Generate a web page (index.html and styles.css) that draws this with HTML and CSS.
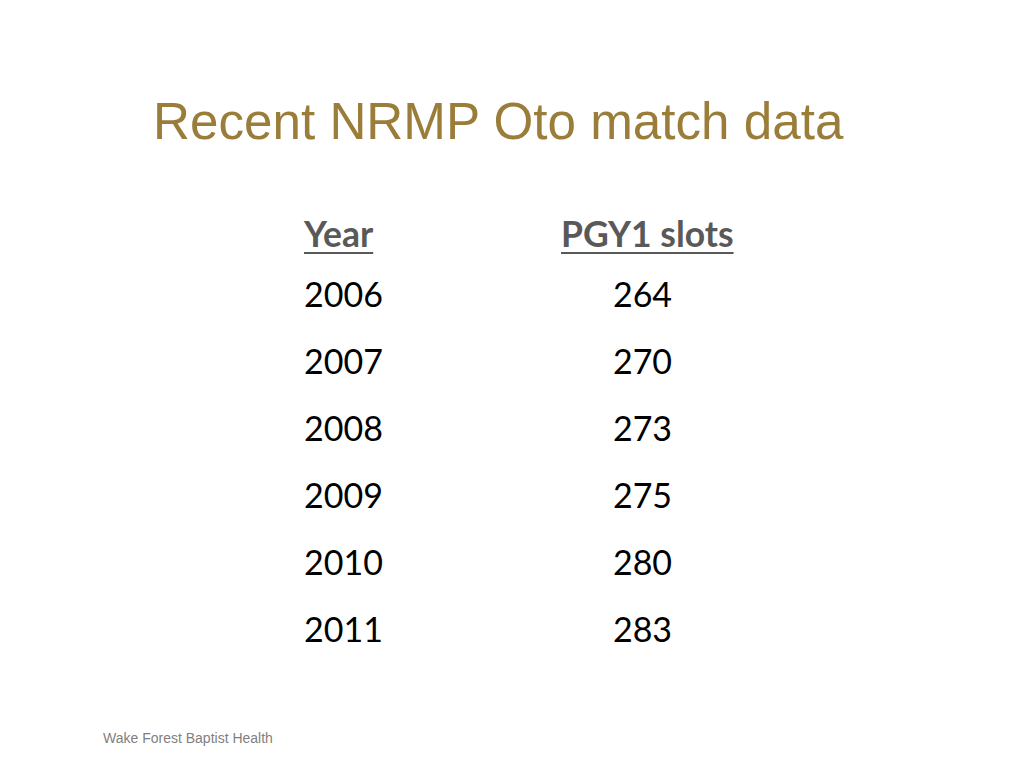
FILE: index.html
```html
<!DOCTYPE html>
<html>
<head>
<meta charset="utf-8">
<title>Recent NRMP Oto match data</title>
<link rel="stylesheet" href="styles.css">
</head>
<body>
<div class="slide">
  <h1 class="title">Recent NRMP Oto match data</h1>
  <div class="table">
    <div class="head"><span class="hd">Year</span></div>
    <div class="head"><span class="hd">PGY1 slots</span></div>
    <div class="year">2006</div><div class="num">264</div>
    <div class="year">2007</div><div class="num">270</div>
    <div class="year">2008</div><div class="num">273</div>
    <div class="year">2009</div><div class="num">275</div>
    <div class="year">2010</div><div class="num">280</div>
    <div class="year">2011</div><div class="num">283</div>
  </div>
  <div class="footer">Wake Forest Baptist Health</div>
</div>
</body>
</html>
```
FILE: styles.css
```css
html, body {
  margin: 0;
  padding: 0;
  background: #ffffff;
}
.slide {
  width: 1024px;
  height: 768px;
  display: flex;
  flex-direction: column;
  box-sizing: border-box;
  padding-bottom: 22px;
}
.title {
  margin: 92px 0 0 0;
  padding-left: 153px;
  font-family: "Liberation Sans", Arial, sans-serif;
  font-weight: normal;
  font-size: 51.2px;
  line-height: 60px;
  color: #9b7d3a;
  white-space: nowrap;
}
.table {
  margin-top: 51px;
  padding-left: 304px;
  display: grid;
  grid-template-columns: 257px 171px;
  grid-template-rows: 57px repeat(6, 67px);
  font-family: Lato, "Open Sans", sans-serif;
  font-size: 34px;
  line-height: 67px;
  color: #000000;
}
.head {
  font-size: 35.5px;
  line-height: 61px;
  font-weight: bold;
  color: #595959;
  white-space: nowrap;
}
.hd {
  text-decoration: underline;
  text-decoration-thickness: 2px;
  text-underline-offset: 5px;
}
.num {
  text-align: center;
  padding-right: 8px;
}
.footer {
  margin-top: auto;
  padding-left: 103px;
  font-family: "Liberation Sans", Arial, sans-serif;
  font-size: 14px;
  line-height: 16px;
  color: #7f7f7f;
}
```
